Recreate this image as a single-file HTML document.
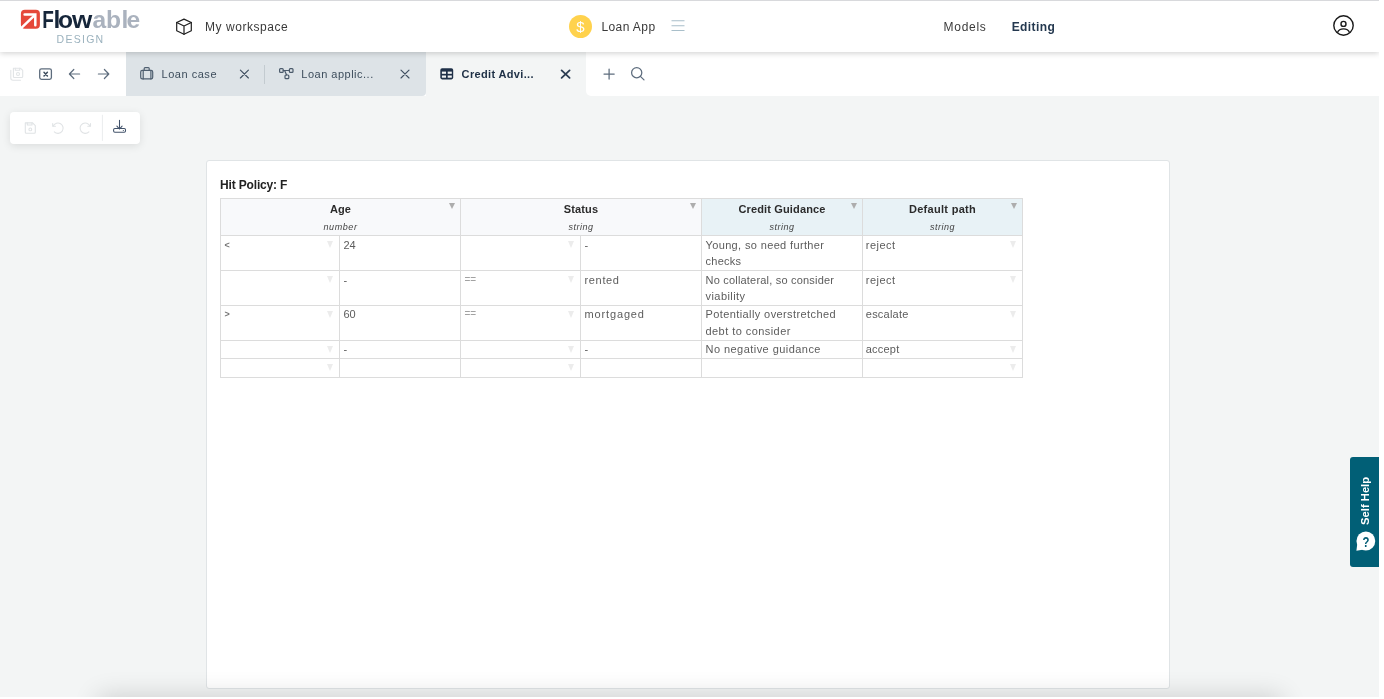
<!DOCTYPE html>
<html lang="en">
<head>
<meta charset="utf-8">
<title>Flowable Design - Credit Advice</title>
<style>
*{box-sizing:border-box;margin:0;padding:0}
html,body{width:1384px;height:699px;overflow:hidden;background:#fff}
body{font-family:"Liberation Sans",sans-serif;color:#333;position:relative}
.abs{position:absolute}
#app{will-change:transform;position:absolute;left:0;top:0;width:1379px;height:696.6px;background:#f3f5f5;overflow:hidden}
#topline{position:absolute;left:0;top:0;width:1379px;height:1px;background:#d8d9dc;z-index:20}
#header{position:absolute;left:0;top:1px;width:1379px;height:51px;background:#fff;box-shadow:0 1px 6px rgba(0,0,0,.2);z-index:10}
#tabbar{position:absolute;left:0;top:52px;width:1379px;height:44px;background:#fff;z-index:5}
.hdrtxt{position:absolute;top:18px;height:16px;line-height:16px;font-size:12px;color:#3a3a3a;white-space:nowrap}
.tab{position:absolute;top:0;height:44px}
.tabtxt{position:absolute;top:14px;height:16px;line-height:16px;font-size:11px;color:#3d4d5c;white-space:nowrap}
svg{position:absolute;overflow:visible}
#toolbar{position:absolute;left:10px;top:112px;width:129.5px;height:32px;background:#fff;border-radius:4px;box-shadow:0 2px 8px rgba(0,0,0,.10)}
#card{position:absolute;left:206px;top:160px;width:964px;height:529px;background:#fff;border:1px solid #e0e4e6;border-radius:3px}
#hit{position:absolute;left:13px;top:15.5px;letter-spacing:-.16px;font-size:12px;font-weight:bold;color:#222;line-height:16px;white-space:nowrap}
table{position:absolute;left:13px;top:37px;border-collapse:collapse;table-layout:fixed;width:802px;font-size:11px;color:#5c5c5c}
td,th{border:1px solid #dcdcdc;vertical-align:top;padding:0;position:relative;overflow:hidden}
th{height:37px;background:#f8f9fb;font-weight:normal;text-align:center}
th.out{background:#e8f2f6}
th b{display:block;font-size:11px;line-height:14px;margin-top:3px;color:#2b2b2b}
th i{display:block;font-size:9px;line-height:12px;margin-top:5px;color:#444}
td{line-height:16.5px;padding:.5px 0 0 3.5px}
td:last-child{padding-left:2.8px}
.op{font-size:9px;color:#747474;position:relative;top:-1px;font-weight:bold}
.op2{font-size:10px;color:#a2a2a2;position:relative;top:-.6px}
.tri{position:absolute;width:0;height:0;border-left:3.5px solid transparent;border-right:3.5px solid transparent;border-top:7px solid #ececec;right:6px;top:5px}
th .tri{border-left-width:3px;border-right-width:3px;border-top-width:6.5px;border-top-color:#adadad;top:4px;right:5px}
#selfhelp{position:absolute;left:1350px;top:457px;width:29px;height:110px;background:#015f76;border-radius:3px 0 0 3px}
#bshadow{position:absolute;left:100px;top:698px;width:1180px;height:30px;box-shadow:0 0 26px 2px rgba(0,0,0,.16);z-index:40}
</style>
</head>
<body>
<div id="app">
  <div id="topline"></div>
  <div id="header">
    <!-- logo -->
    <svg id="logo" style="left:18px;top:7px" width="126" height="40" viewBox="0 0 126 40">
      <rect x="2.9" y="1.7" width="19" height="19" rx="4" fill="#e5483a"/>
      <path d="M6.6 6.6 H17.3 V17.3" fill="none" stroke="#fff" stroke-width="2.5" stroke-linecap="round" stroke-linejoin="miter"/>
      <path d="M16.8 7.1 L1.6 21.6" fill="none" stroke="#fff" stroke-width="2.5"/>
      <text y="19.8" font-family="Liberation Sans, sans-serif" font-weight="bold" font-size="24.6"><tspan x="24.2" fill="#16263a" textLength="11.6" lengthAdjust="spacingAndGlyphs">F</tspan><tspan x="35.4 40.1" fill="#16263a">lo</tspan><tspan x="54.1" fill="#16263a" textLength="20.3" lengthAdjust="spacingAndGlyphs">w</tspan><tspan x="74.5 88 103.4 108.6" fill="#aab2be">able</tspan></text>
      <text x="38.6" y="35" font-family="Liberation Sans, sans-serif" font-size="10.5" fill="#9bb2be" textLength="46.6" lengthAdjust="spacing">DESIGN</text>
    </svg>
    <!-- cube -->
    <svg style="left:175px;top:17px" width="18" height="18" viewBox="0 0 18 18" fill="none" stroke="#1f1f1f" stroke-width="1.2" stroke-linejoin="round" stroke-linecap="round">
      <path d="M9 1.1 L16.3 4.5 V12.8 L9 16.3 L1.7 12.8 V4.5 Z"/>
      <path d="M1.7 4.5 L9 8 L16.3 4.5 M9 8 V16.3"/>
    </svg>
    <div class="hdrtxt" style="left:205px;letter-spacing:.55px">My workspace</div>
    <!-- loan app -->
    <div class="abs" style="left:569px;top:14px;width:23px;height:23px;border-radius:50%;background:#ffd24d;color:#fff;font-size:15px;line-height:23px;text-align:center">$</div>
    <div class="hdrtxt" style="left:601.4px;letter-spacing:.42px">Loan App</div>
    <svg style="left:671px;top:19px" width="14" height="12" viewBox="0 0 14 12" stroke="#a9bfca" stroke-width="1.1" fill="none">
      <path d="M0.5 0.8 H13.5 M0.5 5.7 H13.5 M0.5 10.5 H13.5"/>
    </svg>
    <div class="hdrtxt" style="left:943.6px;letter-spacing:.7px">Models</div>
    <div class="hdrtxt" style="left:1011.7px;font-weight:bold;color:#24384f;letter-spacing:.41px">Editing</div>
    <!-- user -->
    <svg style="left:1333px;top:14px" width="21" height="21" viewBox="0 0 21 21" fill="none" stroke="#1a1a1a" stroke-width="1.4">
      <circle cx="10.5" cy="10.5" r="9.7"/>
      <circle cx="10.5" cy="8.9" r="2.5"/>
      <path d="M4.5 17.5 C5.5 15 7.7 13.9 10.5 13.9 C13.3 13.9 15.5 15 16.5 17.5"/>
    </svg>
  </div>

  <div id="tabbar">
    <div class="abs" style="left:126px;top:0;width:300px;height:44px;background:#dde3e7;border-radius:0 0 4px 0"></div>
    <div class="abs" style="left:426px;top:0;width:160px;height:44px;background:#f3f5f5"></div>
    <div class="abs" style="left:586px;top:0;width:10px;height:44px;background:#f3f5f5"></div>
    <div class="abs" style="left:586px;top:0;width:793px;height:44px;background:#fff;border-radius:0 0 0 5px"></div>
    <div class="abs" style="left:264px;top:13px;width:1px;height:19px;background:#c3cbd0"></div>
    <div class="tabtxt" style="left:161.5px;letter-spacing:.53px">Loan case</div>
    <div class="tabtxt" style="left:301.3px;letter-spacing:.5px">Loan applic...</div>
    <div class="tabtxt" style="left:461.6px;font-weight:bold;color:#1d2f45;letter-spacing:.35px">Credit Advi...</div>
  </div>

  <div id="toolbar"></div>
  <svg id="icons" style="left:0;top:0;z-index:30" width="1379" height="696" viewBox="0 0 1379 696" fill="none" stroke-linecap="round" stroke-linejoin="round">
    <!-- save all (disabled) -->
    <g stroke="#e1e4e6" stroke-width="1.1">
      <path d="M13.4 68.3 H20.6 L22.7 70.4 V76.5 Q22.7 77.5 21.7 77.5 H14.4 Q13.4 77.5 13.4 76.5 Z"/>
      <path d="M15.3 68.3 V70.3 H19.7 V68.3"/>
      <circle cx="18" cy="74" r="1.5"/>
      <path d="M10.8 70.2 V78 Q10.8 80.2 13 80.2 H20.5"/>
    </g>
    <!-- close box -->
    <g stroke="#5d6c7d" stroke-width="1.3">
      <rect x="39.7" y="68.8" width="11.7" height="10.5" rx="1.8"/>
      <path d="M44 72.3 L47.4 75.9 M47.4 72.3 L44 75.9" stroke="#3d4d5e" stroke-width="1.5"/>
    </g>
    <!-- arrows -->
    <g stroke="#5d6c7d" stroke-width="1.2">
      <path d="M79.6 74 H69.6 M73.8 69.5 L69.4 74 L73.8 78.5"/>
      <path d="M98.4 74 H108.6 M104.4 69.5 L108.8 74 L104.4 78.5"/>
    </g>
    <!-- briefcase -->
    <g stroke="#4f5f70" stroke-width="1.2">
      <rect x="140.7" y="70.3" width="12" height="8.6" rx="1.6"/>
      <path d="M144.2 70.3 V68.6 Q144.2 67.7 145.1 67.7 H148.3 Q149.2 67.7 149.2 68.6 V70.3"/>
      <path d="M143.2 70.3 V78.9 M150.9 70.3 V78.9"/>
    </g>
    <!-- tab close x -->
    <g stroke="#3f4f60" stroke-width="1.15">
      <path d="M240.4 70.2 L248.4 78 M248.4 70.2 L240.4 78"/>
      <path d="M401 70.2 L409 78 M409 70.2 L401 78"/>
    </g>
    <path d="M561.6 70.4 L569.6 77.8 M569.6 70.4 L561.6 77.8" stroke="#2b3c52" stroke-width="1.8"/>
    <!-- process icon -->
    <g stroke="#4a5a6b" stroke-width="1.2">
      <rect x="279.6" y="68.6" width="3.6" height="3.7" rx="0.9"/>
      <rect x="289.4" y="68.6" width="3.6" height="3.7" rx="0.9"/>
      <rect x="285" y="75" width="3.8" height="3.7" rx="0.9"/>
      <path d="M283.2 70.5 H289.4 M284.6 70.6 L286.6 75"/>
    </g>
    <!-- table icon -->
    <rect x="440.3" y="68.2" width="12.9" height="11.2" rx="1.8" fill="#1f3048"/>
    <g fill="#f3f5f5" stroke="none">
      <rect x="441.9" y="71.6" width="4.1" height="2.2"/>
      <rect x="447.7" y="71.6" width="4.1" height="2.2"/>
      <rect x="441.9" y="75.5" width="4.1" height="2.2"/>
      <rect x="447.7" y="75.5" width="4.1" height="2.2"/>
    </g>
    <!-- plus & search -->
    <g stroke="#5d6c7d" stroke-width="1.25">
      <path d="M604 74 H614.2 M609.1 69 V79"/>
      <circle cx="636.7" cy="72.7" r="5.1"/>
      <path d="M640.4 76.4 L644 79.9"/>
    </g>
    <!-- toolbar icons -->
    <g stroke="#e0e3e5" stroke-width="1.1">
      <path d="M25.3 122.9 H32.6 L35.3 125.6 V132.2 Q35.3 133.2 34.3 133.2 H26.3 Q25.3 133.2 25.3 132.2 Z"/>
      <path d="M27.3 122.9 V125 H32 V122.9"/>
      <circle cx="30.3" cy="129.4" r="1.4"/>
      <path d="M52.7 123.6 V126.3 H55.4"/>
      <path d="M53.2 126 A5.2 5.2 0 1 1 54.3 131.9"/>
      <path d="M90.5 123.6 V126.3 H87.8"/>
      <path d="M90 126 A5.2 5.2 0 1 0 88.9 131.9"/>
    </g>
    <path d="M102.4 115.2 V140.5" stroke="#eaecee" stroke-width="1"/>
    <g stroke="#41526a" stroke-width="1.05">
      <path d="M119.5 120.2 V128.9 M116.9 126.1 L119.5 129 L122.1 126.1"/>
      <rect x="113.6" y="128.5" width="11.9" height="3.8" rx="1.3"/>
      <path d="M123.3 130.4 H123.4"/>
    </g>
  </svg>


  <div id="card">
    <div id="hit">Hit Policy: F</div>
    <table>
      <colgroup><col style="width:119px"><col style="width:121px"><col style="width:120px"><col style="width:121px"><col style="width:161px"><col style="width:160px"></colgroup>
      <tr>
        <th colspan="2"><b>Age</b><i style="letter-spacing:.62px">number</i><span class="tri"></span></th>
        <th colspan="2"><b style="letter-spacing:.12px">Status</b><i style="letter-spacing:.46px">string</i><span class="tri"></span></th>
        <th class="out"><b style="letter-spacing:.15px">Credit Guidance</b><i style="letter-spacing:.46px">string</i><span class="tri"></span></th>
        <th class="out"><b style="letter-spacing:.3px">Default path</b><i style="letter-spacing:.46px">string</i><span class="tri"></span></th>
      </tr>
      <tr style="height:35px"><td><span class="op">&lt;</span><span class="tri"></span></td><td>24</td><td><span class="tri"></span></td><td>-</td><td><span style="letter-spacing:.36px">Young, so need further</span><br><span style="letter-spacing:.27px">checks</span></td><td><span style="letter-spacing:.48px">reject</span><span class="tri"></span></td></tr>
      <tr style="height:34px"><td><span class="tri"></span></td><td>-</td><td><span class="op2">==</span><span class="tri"></span></td><td><span style="letter-spacing:.66px">rented</span></td><td><span style="letter-spacing:.2px">No collateral, so consider</span><br><span style="letter-spacing:.44px">viability</span></td><td><span style="letter-spacing:.48px">reject</span><span class="tri"></span></td></tr>
      <tr style="height:35px"><td><span class="op">&gt;</span><span class="tri"></span></td><td>60</td><td><span class="op2">==</span><span class="tri"></span></td><td><span style="letter-spacing:.86px">mortgaged</span></td><td><span style="letter-spacing:.4px">Potentially overstretched</span><br><span style="letter-spacing:.44px">debt to consider</span></td><td><span style="letter-spacing:.22px">escalate</span><span class="tri"></span></td></tr>
      <tr style="height:18px"><td><span class="tri"></span></td><td>-</td><td><span class="tri"></span></td><td>-</td><td><span style="letter-spacing:.45px">No negative guidance</span></td><td><span style="letter-spacing:.2px">accept</span><span class="tri"></span></td></tr>
      <tr style="height:19px"><td><span class="tri"></span></td><td></td><td><span class="tri"></span></td><td></td><td></td><td><span class="tri"></span></td></tr>
    </table>
  </div>

  <div id="selfhelp">
    <svg style="left:0;top:0" width="29" height="110" viewBox="1350 457 29 110">
      <text transform="translate(1369.3,524.9) rotate(-90)" font-family="Liberation Sans, sans-serif" font-weight="bold" font-size="11" fill="#fff" textLength="48" lengthAdjust="spacingAndGlyphs">Self Help</text>
      <ellipse cx="1365.85" cy="541" rx="9.4" ry="9.6" fill="#fff"/>
      <path d="M1357.2 544.5 L1356.4 550.7 L1362.5 549.8 Z" fill="#fff"/>
      <text transform="translate(1366 546.5) scale(.84 1.04)" text-anchor="middle" font-family="Liberation Sans, sans-serif" font-weight="bold" font-size="13.5" fill="#045d75">?</text>
    </svg>
  </div>
  <div id="bshadow"></div>
</div>
</body>
</html>
